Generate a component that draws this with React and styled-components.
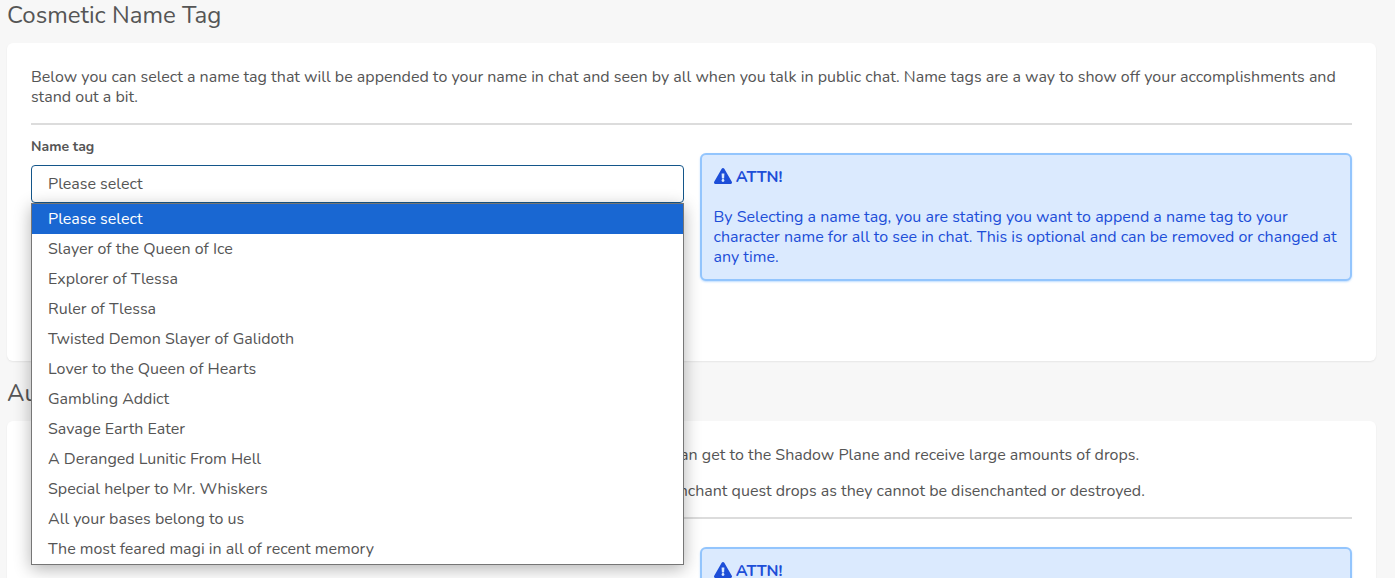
import React, { useState } from "react";
import styled, { createGlobalStyle } from "styled-components";

const GlobalStyle = createGlobalStyle`
  *, *::before, *::after { box-sizing: border-box; }
  body {
    margin: 0;
    background: #f7f7f7;
    color: #555555;
    font-family: Nunito, Lato, "Open Sans", sans-serif;
    font-size: 16px;
    line-height: 20px;
  }
`;

const Page = styled.main`
  display: flex;
  flex-direction: column;
  gap: 20px;
  padding: 3px 19px 24px 7px;
`;

const Section = styled.section`
  display: flex;
  flex-direction: column;
  gap: 16px;
`;

const Heading = styled.h2`
  margin: 0;
  font-size: 24px;
  font-weight: 400;
  line-height: 24px;
`;

const Card = styled.div`
  padding: 24px;
  background: #ffffff;
  border-radius: 6px;
  box-shadow: 0 1px 2px rgba(0, 0, 0, 0.07);
`;

const Copy = styled.p`
  margin: 0 0 16px;
`;

const Divider = styled.hr`
  height: 2px;
  margin: 0;
  border: 0;
  background: #dcdcdc;
`;

const Columns = styled.div`
  display: grid;
  grid-template-columns: 1fr 1fr;
  align-items: start;
  gap: 16px;
  min-height: 212px;
`;

const Field = styled.div`
  position: relative;
  display: flex;
  flex-direction: column;
  gap: 8px;
  padding-top: 12px;
`;

const Label = styled.label`
  font-size: 14px;
  font-weight: 700;
  line-height: 20px;
`;

const Select = styled.select`
  appearance: none;
  width: 100%;
  height: 38px;
  padding: 0 16px;
  border: 1px solid #14568a;
  border-radius: 4px;
  outline: none;
  background: #ffffff;
  color: inherit;
  font: inherit;
`;

const OptionList = styled.ul`
  position: absolute;
  top: 100%;
  left: 0;
  right: 0;
  z-index: 2;
  margin: 0;
  padding: 0;
  border: 1px solid #767676;
  background: #ffffff;
  box-shadow: 0 4px 16px rgba(0, 0, 0, 0.3);
  list-style: none;
`;

const Option = styled.li`
  padding: 0 16px;
  background: ${({ $active }) => ($active ? "#1967d2" : "#ffffff")};
  color: ${({ $active }) => ($active ? "#ffffff" : "inherit")};
  line-height: 30px;
  cursor: default;
`;

const Alert = styled.aside`
  margin-top: 28px;
  padding: 12px;
  border: 2px solid #93c5fd;
  border-radius: 6px;
  background: #dbeafe;
  box-shadow: 0 1px 2px rgba(147, 197, 253, 0.6);
  color: #1d4ed8;
`;

const AlertTitle = styled.strong`
  display: block;
  height: 20px;
  margin-bottom: 20px;
  font-weight: 700;
`;

const AlertText = styled.p`
  margin: 0;
`;

const InlineIcon = styled.svg`
  vertical-align: -2px;
`;

const nameTags = [
  "Please select",
  "Slayer of the Queen of Ice",
  "Explorer of Tlessa",
  "Ruler of Tlessa",
  "Twisted Demon Slayer of Galidoth",
  "Lover to the Queen of Hearts",
  "Gambling Addict",
  "Savage Earth Eater",
  "A Deranged Lunitic From Hell",
  "Special helper to Mr. Whiskers",
  "All your bases belong to us",
  "The most feared magi in all of recent memory",
];

const WarningIcon = () => (
  <InlineIcon width="18" height="16" viewBox="0 0 576 512" fill="currentColor" aria-hidden="true">
    <path d="M569.517 440.013C587.975 472.007 564.806 512 527.94 512H48.054c-36.937 0-59.999-40.055-41.577-71.987L246.423 23.985c18.467-32.009 64.72-31.951 83.154 0l239.94 416.028zM288 354c-25.405 0-46 20.595-46 46s20.595 46 46 46 46-20.595 46-46-20.595-46-46-46zm-43.673-165.346l7.418 136c.347 6.364 5.609 11.346 11.982 11.346h48.546c6.373 0 11.635-4.982 11.982-11.346l7.418-136c.375-6.874-5.098-12.654-11.982-12.654h-63.383c-6.884 0-12.356 5.78-11.981 12.654z" />
  </InlineIcon>
);

const Notice = ({ children }) => (
  <Alert>
    <AlertTitle>
      <WarningIcon /> ATTN!
    </AlertTitle>
    <AlertText>{children}</AlertText>
  </Alert>
);

const NameTagField = () => {
  const [tag, setTag] = useState(nameTags[0]);
  return (
    <Field>
      <Label htmlFor="name-tag">Name tag</Label>
      <Select id="name-tag" value={tag} onChange={(e) => setTag(e.target.value)}>
        {nameTags.map((name) => (
          <option key={name}>{name}</option>
        ))}
      </Select>
      <OptionList role="listbox" aria-label="Name tag">
        {nameTags.map((name) => (
          <Option
            key={name}
            role="option"
            aria-selected={name === tag}
            $active={name === tag}
            onClick={() => setTag(name)}
          >
            {name}
          </Option>
        ))}
      </OptionList>
    </Field>
  );
};

export default function App() {
  return (
    <>
      <GlobalStyle />
      <Page>
        <Section>
          <Heading>Cosmetic Name Tag</Heading>
          <Card>
            <Copy>
              Below you can select a name tag that will be appended to your name in chat and seen by
              all when you talk in public chat. Name tags are a way to show off your accomplishments
              and stand out a bit.
            </Copy>
            <Divider />
            <Columns>
              <NameTagField />
              <Notice>
                By Selecting a name tag, you are stating you want to append a name tag to your
                character name for all to see in chat. This is optional and can be removed or
                changed at any time.
              </Notice>
            </Columns>
          </Card>
        </Section>
        <Section>
          <Heading>Auto Disenchanting</Heading>
          <Card>
            <Copy>
              When enabled, items are disenchanted for you as they drop. Useful for most players who
              can get to the Shadow Plane and receive large amounts of drops.
            </Copy>
            <Copy>
              Enchanted items are turned straight into gold dust for you as they drop. We will never
              disenchant quest drops as they cannot be disenchanted or destroyed.
            </Copy>
            <Divider />
            <Columns>
              <Field />
              <Notice>Items that drop are disenchanted for you while this is enabled.</Notice>
            </Columns>
          </Card>
        </Section>
      </Page>
    </>
  );
}
